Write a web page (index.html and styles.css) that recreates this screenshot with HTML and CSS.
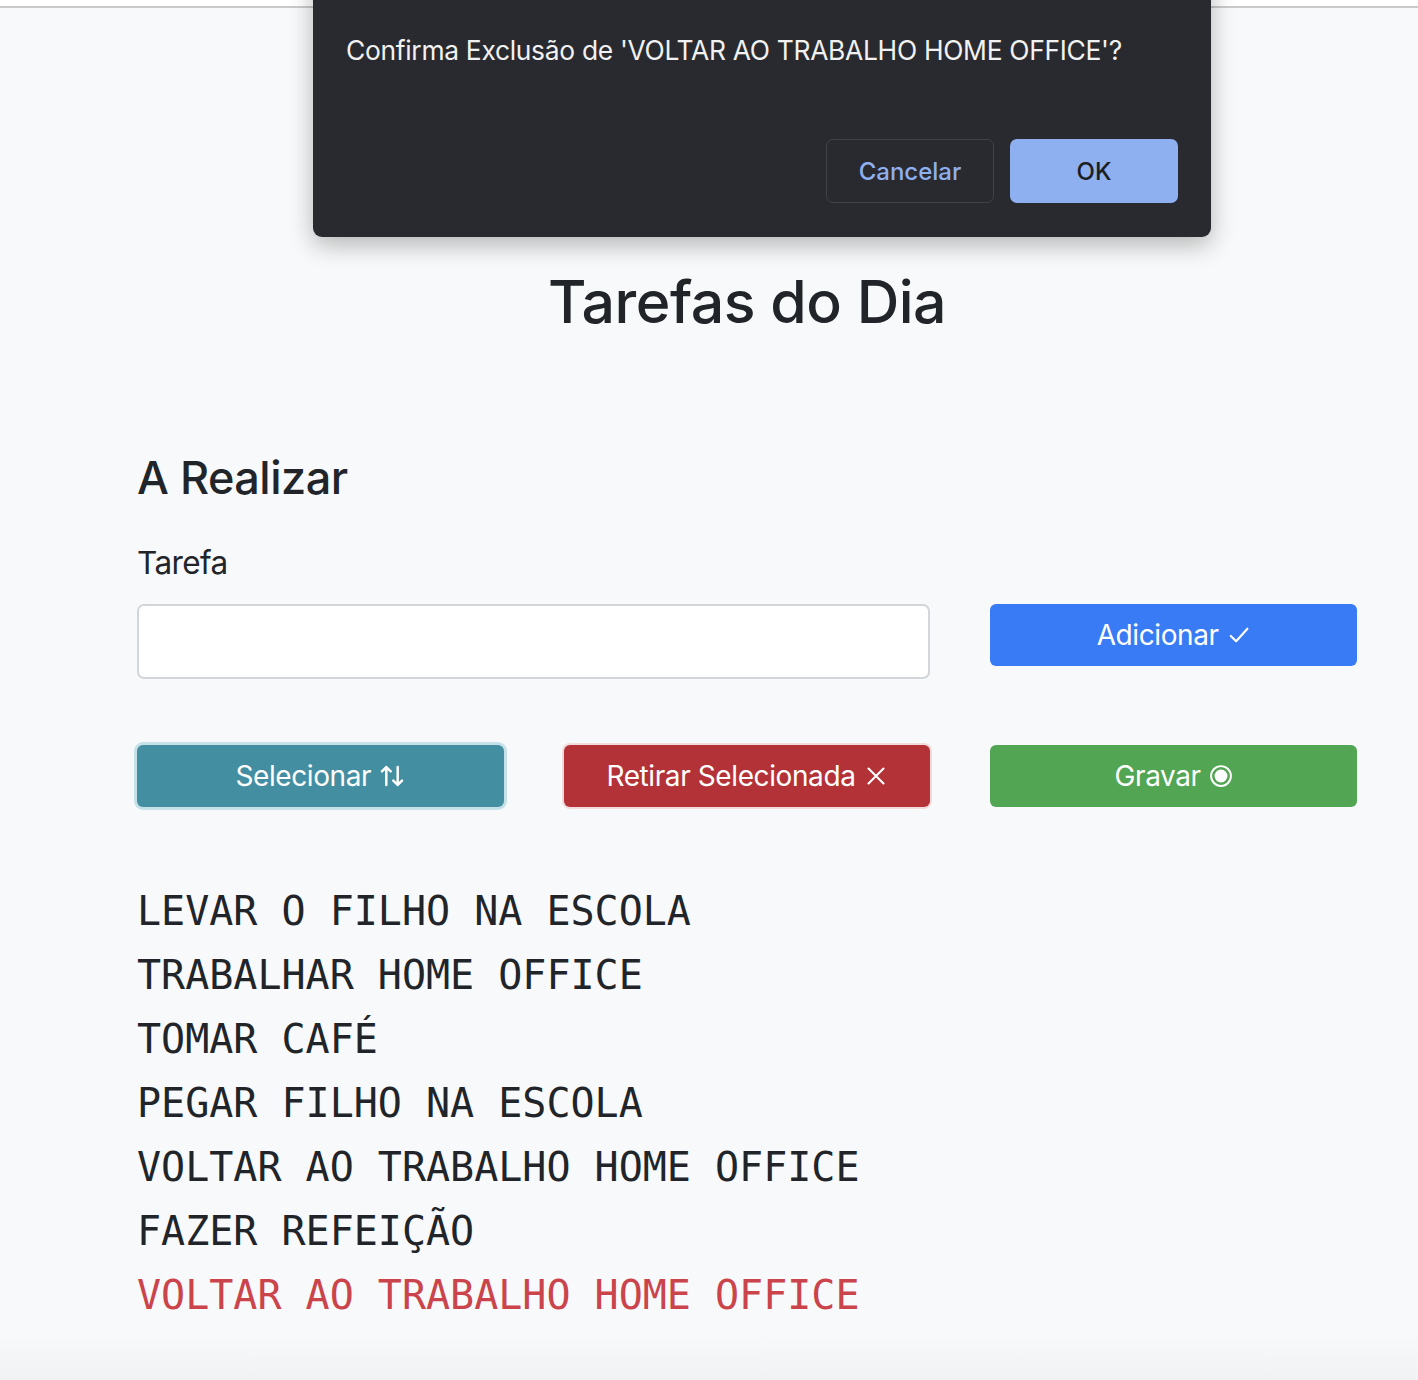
FILE: index.html
```html
<!DOCTYPE html>
<html lang="pt-BR">
<head>
<meta charset="utf-8">
<title>Tarefas do Dia</title>
<link rel="stylesheet" href="styles.css">
</head>
<body>
<div class="topbar"></div>
<main class="container">
  <h1 class="title">Tarefas do Dia</h1>
  <h2 class="section">A Realizar</h2>
  <label class="label" for="tarefa">Tarefa</label>
  <div class="grid">
    <input id="tarefa" class="input" type="text">
    <button class="btn btn-primary">Adicionar
      <svg class="ico" viewBox="0 0 16 16" width="24" height="24"><path d="M2.5 8.6l3.6 3.6L13.6 3.8" fill="none" stroke="currentColor" stroke-width="1.4" stroke-linecap="round" stroke-linejoin="round"/></svg>
    </button>
  </div>
  <div class="grid grid-actions">
    <button class="btn btn-info focus">Selecionar
      <svg class="ico" viewBox="0 0 16 16" width="26" height="26"><path d="M4.5 13.5V2.5M1.8 5.2l2.7-2.7 2.7 2.7M11.5 2.5v11M8.8 10.8l2.7 2.7 2.7-2.7" fill="none" stroke="currentColor" stroke-width="1.5" stroke-linecap="round" stroke-linejoin="round"/></svg>
    </button>
    <button class="btn btn-danger">Retirar Selecionada
      <svg class="ico" viewBox="0 0 16 16" width="24" height="24"><path d="M3 3l10 10M13 3L3 13" fill="none" stroke="currentColor" stroke-width="1.4" stroke-linecap="round"/></svg>
    </button>
    <button class="btn btn-success">Gravar
      <svg class="ico" viewBox="0 0 16 16" width="24" height="24"><circle cx="8" cy="8" r="6.6" fill="none" stroke="currentColor" stroke-width="1.3"/><circle cx="8" cy="8" r="4.3" fill="currentColor"/></svg>
    </button>
  </div>
  <ul class="tasks">
    <li>LEVAR O FILHO NA ESCOLA</li>
    <li>TRABALHAR HOME OFFICE</li>
    <li>TOMAR CAFÉ</li>
    <li>PEGAR FILHO NA ESCOLA</li>
    <li>VOLTAR AO TRABALHO HOME OFFICE</li>
    <li>FAZER REFEIÇÃO</li>
    <li class="selected">VOLTAR AO TRABALHO HOME OFFICE</li>
  </ul>
</main>
<div class="dialog" role="alertdialog">
  <div class="dialog-title">localhost:3000 diz</div>
  <p class="dialog-msg">Confirma Exclusão de 'VOLTAR AO TRABALHO HOME OFFICE'?</p>
  <div class="dialog-actions">
    <button class="dbtn dbtn-cancel">Cancelar</button>
    <button class="dbtn dbtn-ok">OK</button>
  </div>
</div>
</body>
</html>
```
FILE: styles.css
```css
* { box-sizing: border-box; }
html, body { margin: 0; padding: 0; }
body {
  background: linear-gradient(to bottom, #f8f9fa 0, #f8f9fa 1330px, #f1f2f3 1380px);
  color: #212529;
  font-family: Inter, "Noto Sans", sans-serif;
  min-height: 1380px;
}
.topbar {
  height: 8px;
  background: #ffffff;
  border-bottom: 2px solid #c9cbca;
}
.container {
  width: 1220px;
  margin-left: 137px;
}
.title {
  margin: 258px 0 0;
  text-align: center;
  font-size: 59px;
  font-weight: 500;
  line-height: 72px;
  letter-spacing: -0.5px;
}
.section {
  margin: 114px 0 0;
  font-size: 45px;
  font-weight: 500;
  line-height: 52px;
  letter-spacing: -0.5px;
}
.label {
  display: block;
  margin-top: 40px;
  font-size: 31.5px;
  line-height: 38px;
  letter-spacing: -0.6px;
}
.grid {
  display: grid;
  grid-template-columns: repeat(3, 1fr);
  column-gap: 60px;
  align-items: start;
  margin-top: 22px;
}
.input {
  grid-column: span 2;
  height: 75px;
  border: 2px solid #d3d6d9;
  border-radius: 7px;
  background: #fff;
  font: inherit;
}
.grid-actions { margin-top: 66px; }
.btn {
  display: flex;
  align-items: center;
  justify-content: center;
  gap: 8px;
  height: 62px;
  border: 0;
  border-radius: 6px;
  color: #fff;
  font-family: Inter, "Noto Sans", sans-serif;
  font-size: 28px;
  letter-spacing: -0.4px;
  padding: 0;
}
.ico { display: block; }
.btn-primary { background: #387bf5; }
.btn-info { background: #438ea1; }
.btn-danger { background: #b33238; box-shadow: 0 0 0 2px #f3dadb; }
.btn-success { background: #52a552; }
.focus { box-shadow: 0 0 0 3px #c7e1e8; }
.tasks {
  list-style: none;
  margin: 72px 0 0;
  padding: 0;
  font-family: "DejaVu Sans Mono", monospace;
  font-size: 40px;
  line-height: 64px;
}
.tasks .selected { color: #cb444b; }
.dialog {
  position: absolute;
  left: 313px;
  top: -40px;
  width: 898px;
  height: 277px;
  background: #292a2f;
  border-radius: 9px;
  box-shadow: 0 8px 24px rgba(0, 0, 0, 0.28);
  padding: 0 33px;
  color: #f1f1f2;
  font-family: Inter, "Noto Sans", sans-serif;
}
.dialog-title {
  margin-top: 18px;
  font-size: 24px;
  line-height: 26px;
  color: #e6e6e8;
  padding-left: 50px;
}
.dialog-msg {
  margin: 31px 0 0;
  font-size: 26.4px;
  line-height: 30px;
  letter-spacing: -0.3px;
}
.dialog-actions {
  display: flex;
  justify-content: flex-end;
  gap: 16px;
  margin-top: 74px;
}
.dbtn {
  width: 168px;
  height: 64px;
  border-radius: 7px;
  font-family: Inter, "Noto Sans", sans-serif;
  font-size: 24px;
  font-weight: 500;
}
.dbtn-cancel {
  background: #292a2f;
  border: 1px solid #414247;
  color: #8fb0f0;
}
.dbtn-ok {
  background: #8fb0f0;
  border: 0;
  color: #1c1e22;
}
```
